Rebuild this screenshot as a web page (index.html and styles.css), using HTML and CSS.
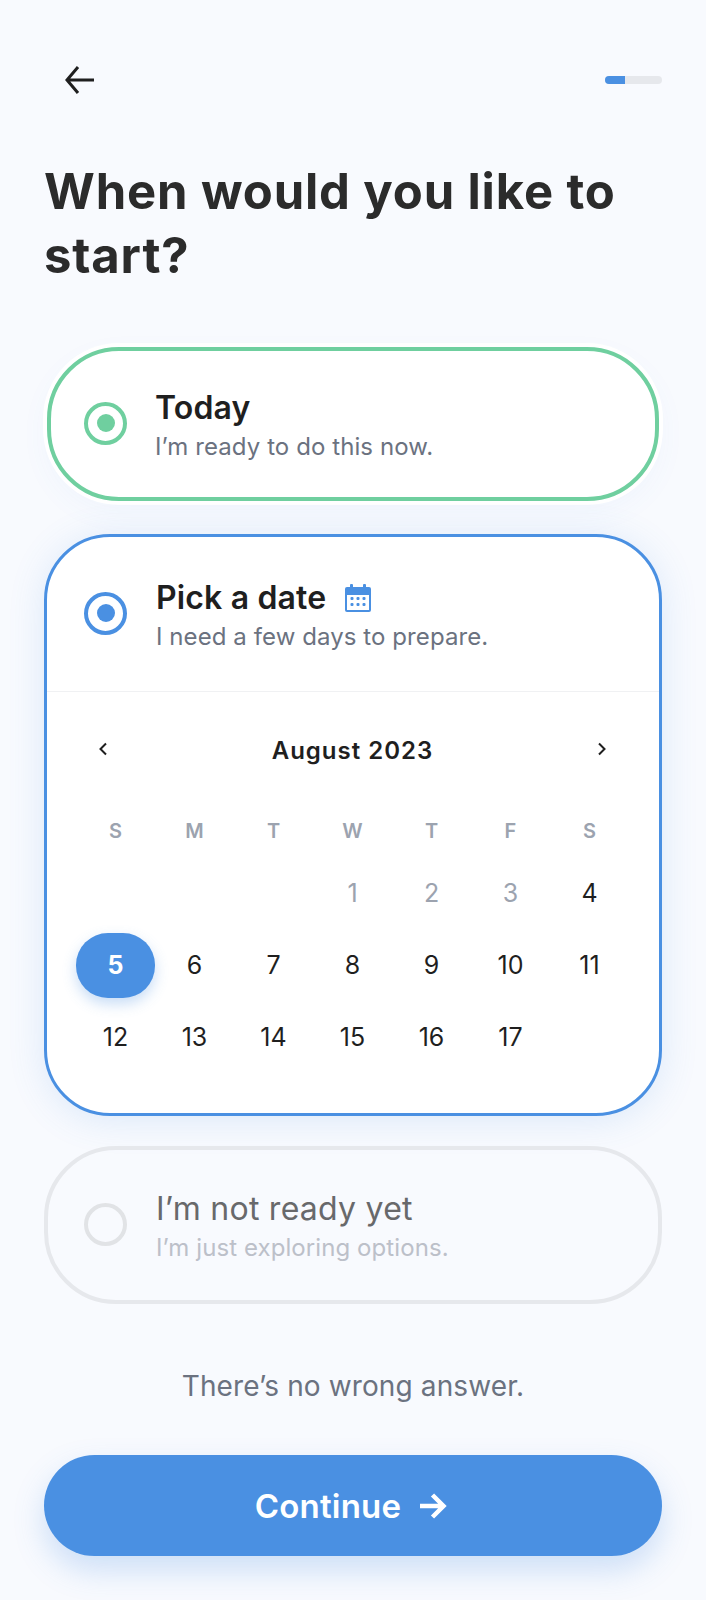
FILE: index.html
```html
<!DOCTYPE html>
<html lang="en">
<head>
<meta charset="utf-8">
<title>When would you like to start?</title>
<link rel="stylesheet" href="styles.css">
</head>
<body>
<main class="screen">
  <header class="topbar">
    <svg class="back" width="32" height="30" viewBox="0 0 32 30"><path d="M30 15H3M14 2 3 15l11 13" fill="none" stroke="#1f1f1f" stroke-width="3"/></svg>
    <div class="progress"><div class="progress-fill"></div></div>
  </header>
  <h1 class="title">When would you like to start?</h1>

  <section class="card card-green">
    <div class="option option-today">
      <span class="radio radio-green"><span class="dot dot-green"></span></span>
      <div class="labels">
        <div class="name">Today</div>
        <div class="sub">I’m ready to do this now.</div>
      </div>
    </div>
  </section>

  <section class="card card-blue">
    <div class="option option-date">
      <span class="radio radio-blue"><span class="dot dot-blue"></span></span>
      <div class="labels">
        <div class="name name-row">Pick a date
          <svg class="cal" width="26" height="28" viewBox="0 0 26 28">
            <path d="M2 3h22a2 2 0 0 1 2 2v21a2 2 0 0 1-2 2H2a2 2 0 0 1-2-2V5a2 2 0 0 1 2-2z" fill="#4a90e2"/>
            <rect x="5" y="0" width="3" height="6" rx="1" fill="#4a90e2"/><rect x="18" y="0" width="3" height="6" rx="1" fill="#4a90e2"/>
            <rect x="2" y="11" width="22" height="15" fill="#fff"/>
            <g fill="#4a90e2"><rect x="5.500" y="13" width="3" height="3" rx="1"/><rect x="11.500" y="13" width="3" height="3" rx="1"/><rect x="17.500" y="13" width="3" height="3" rx="1"/><rect x="5.500" y="19" width="3" height="3" rx="1"/><rect x="11.500" y="19" width="3" height="3" rx="1"/><rect x="17.500" y="19" width="3" height="3" rx="1"/></g>
          </svg>
        </div>
        <div class="sub">I need a few days to prepare.</div>
      </div>
    </div>
    <div class="calendar">
      <div class="month-row">
        <svg class="chev" width="10" height="14" viewBox="0 0 10 14"><path d="M8 1.500 2.500 7 8 12.500" fill="none" stroke="#1f1f1f" stroke-width="2"/></svg>
        <div class="month">August 2023</div>
        <svg class="chev" width="10" height="14" viewBox="0 0 10 14"><path d="M2 1.500 7.500 7 2 12.500" fill="none" stroke="#1f1f1f" stroke-width="2"/></svg>
      </div>
      <div class="grid weekdays">
        <span>S</span><span>M</span><span>T</span><span>W</span><span>T</span><span>F</span><span>S</span>
      </div>
      <div class="grid days">
        <span></span><span></span><span></span><span class="muted">1</span><span class="muted">2</span><span class="muted">3</span><span>4</span>
        <span class="selected">5</span><span>6</span><span>7</span><span>8</span><span>9</span><span>10</span><span>11</span>
        <span>12</span><span>13</span><span>14</span><span>15</span><span>16</span><span>17</span><span></span>
      </div>
    </div>
  </section>

  <section class="card card-off">
    <div class="option">
      <span class="radio radio-off"></span>
      <div class="labels">
        <div class="name name-off">I’m not ready yet</div>
        <div class="sub sub-off">I’m just exploring options.</div>
      </div>
    </div>
  </section>

  <p class="note">There’s no wrong answer.</p>

  <button class="cta">Continue
    <svg width="27" height="26" viewBox="0 0 27 26"><path d="M0 13h24M12.500 2l11 11-11 11" fill="none" stroke="#fff" stroke-width="4.500"/></svg>
  </button>
</main>
</body>
</html>
```
FILE: styles.css
```css
* { box-sizing: border-box; }
html, body { margin: 0; padding: 0; }
body { background: #f8fafe; font-family: "Inter", "Noto Sans", sans-serif; color: #1f1f1f; }
.screen { width: 706px; height: 1600px; padding: 65px 44px 0; overflow: hidden; }
.topbar { display: flex; justify-content: space-between; align-items: center; height: 30px; padding: 0 0 0 20px; }
.progress { width: 57px; height: 8px; background: #e6e8ec; border-radius: 4px; overflow: hidden; }
.progress-fill { width: 20px; height: 8px; background: #4a90e2; }
.title { margin: 65px 0 0; font-size: 49px; line-height: 64px; font-weight: 700; color: #2b2b2b; letter-spacing: .85px; width: 610px; }
.card { border-radius: 72px; background: #fff; }
.card-green { margin: 59px 3px 0; border: 4px solid #6fcf9f; height: 154px; box-shadow: 0 0 0 4px #fff, 0 10px 30px rgba(74,144,226,.05); display: flex; }
.card-blue { margin-top: 33px; border: 3px solid #4a90e2; height: 582px; box-shadow: 0 4px 36px rgba(74,144,226,.16); border-radius: 66px; }
.card-off { margin-top: 30px; border: 4px solid #e6e8ec; height: 158px; background: transparent; display: flex; }
.option { display: flex; align-items: center; flex: 1; padding: 0 0 0 36px; }
.option-today { padding-left: 33px; }
.option-today .radio { margin-right: 28px; }
.option-date { height: 155px; flex: none; border-bottom: 1px solid #f0f1f3; padding-left: 37px; }
.radio { flex: none; width: 43px; height: 43px; border-radius: 50%; border: 4px solid; display: flex; align-items: center; justify-content: center; margin: 0 29px 2px 0; }
.radio-green { border-color: #6fcf9f; }
.radio-blue { border-color: #4a90e2; }
.radio-off { border-color: #e1e3e6; }
.dot { width: 18px; height: 18px; border-radius: 50%; }
.dot-green { background: #6fcf9f; }
.dot-blue { background: #4a90e2; }
.labels { padding-top: 5px; }
.name { font-size: 32px; line-height: 40px; font-weight: 600; letter-spacing: .15px; color: #1f1f1f; }
.name-row { display: flex; align-items: center; gap: 19px; }
.name-off { font-weight: 400; letter-spacing: .25px; color: #68696b; }
.sub { font-size: 24px; line-height: 38px; letter-spacing: .08px; color: #6b7280; }
.sub-off { color: #bcc0c9; }
.calendar { padding: 0 29px; }
.month-row { display: flex; align-items: center; justify-content: space-between; height: 117px; padding: 0 23px 0 22px; }
.chev { margin-bottom: 4px; }
.month { font-size: 24px; font-weight: 600; letter-spacing: 1px; color: #1f1f1f; }
.grid { display: grid; grid-template-columns: repeat(7, 79px); }
.grid span { display: flex; align-items: center; justify-content: center; }
.weekdays span { height: 44px; font-size: 20px; font-weight: 600; color: #9ca3af; }
.days { margin-top: 4px; grid-auto-rows: 72px; font-size: 25px; color: #1f1f1f; }
.days .muted { color: #9ca3af; }
.days .selected { background: #4a90e2; color: #fff; font-weight: 700; border-radius: 32px; height: 65px; align-self: center; box-shadow: 0 6px 14px rgba(74,144,226,.3); }
.note { margin: 62px 0 0; text-align: center; font-size: 28px; letter-spacing: .12px; line-height: 40px; color: #6b7280; }
.cta { display: flex; align-items: center; justify-content: center; gap: 19px; width: 100%; height: 101px; margin-top: 49px; padding: 0 4px 0 0; border: 0; border-radius: 51px; background: #4a90e2; color: #fff; font: 600 33px "Inter", sans-serif; letter-spacing: .2px; box-shadow: 0 14px 30px rgba(74,144,226,.25); }
```
